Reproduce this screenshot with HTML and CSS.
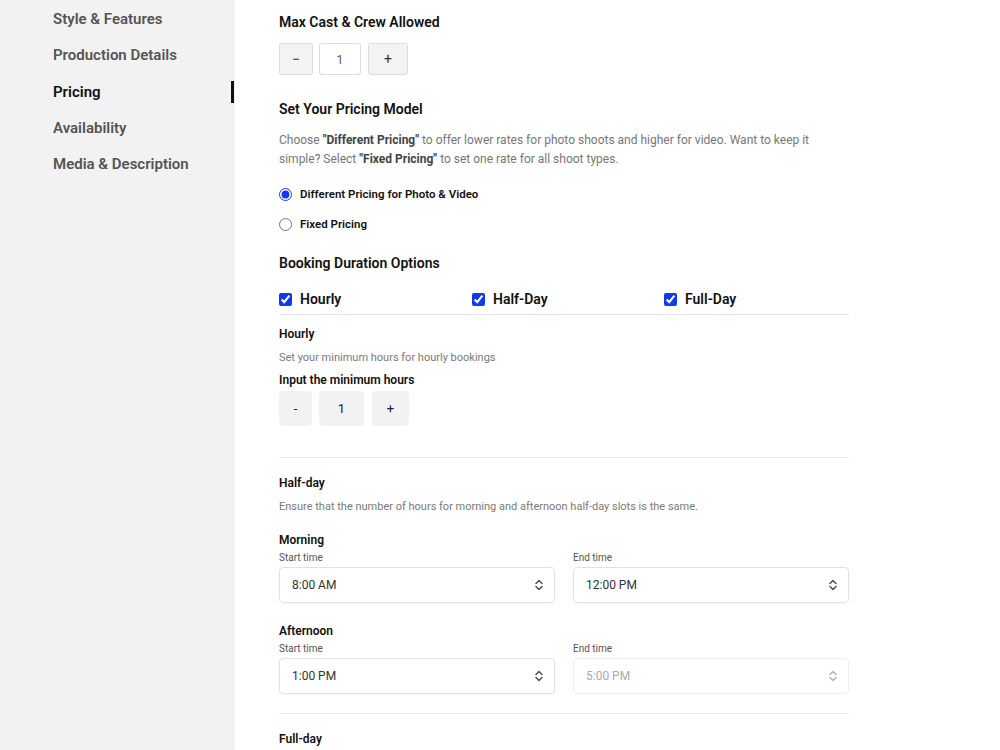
FILE: index.html
```html
<!DOCTYPE html>
<html lang="en">
<head>
  <meta charset="UTF-8">
  <meta name="viewport" content="width=device-width, initial-scale=1">
  <title>Listing - Pricing</title>
  <link rel="stylesheet" href="styles.css">
</head>
<body>
  <aside class="sidebar">
    <nav class="steps">
      <a class="step">Style &amp; Features</a>
      <a class="step">Production Details</a>
      <a class="step active">Pricing</a>
      <a class="step">Availability</a>
      <a class="step">Media &amp; Description</a>
    </nav>
  </aside>

  <main class="content">
    <h3 class="title first">Max Cast &amp; Crew Allowed</h3>
    <div class="counter">
      <button class="counter-btn">&minus;</button>
      <div class="counter-val">1</div>
      <button class="counter-btn plus">+</button>
    </div>

    <h3 class="title">Set Your Pricing Model</h3>
    <p class="intro">Choose <b>"Different Pricing"</b> to offer lower rates for photo shoots and higher for video. Want to keep it simple? Select <b>"Fixed Pricing"</b> to set one rate for all shoot types.</p>
    <label class="radio"><input type="radio" name="model" checked> Different Pricing for Photo &amp; Video</label>
    <label class="radio"><input type="radio" name="model"> Fixed Pricing</label>

    <h3 class="title booking">Booking Duration Options</h3>
    <div class="durations">
      <label class="check"><input type="checkbox" checked> Hourly</label>
      <label class="check"><input type="checkbox" checked> Half-Day</label>
      <label class="check"><input type="checkbox" checked> Full-Day</label>
    </div>

    <section class="block hourly">
      <h4 class="sub">Hourly</h4>
      <p class="hint">Set your minimum hours for hourly bookings</p>
      <div class="field-label">Input the minimum hours</div>
      <div class="stepper">
        <button class="step-btn">-</button>
        <div class="step-val">1</div>
        <button class="step-btn wide">+</button>
      </div>
    </section>

    <section class="block halfday">
      <h4 class="sub">Half-day</h4>
      <p class="hint">Ensure that the number of hours for morning and afternoon half-day slots is the same.</p>

      <div class="slot">
        <div class="slot-name">Morning</div>
        <div class="slot-grid">
          <div class="pick">
            <div class="pick-label">Start time</div>
            <div class="select">8:00 AM
              <svg class="chev" width="10" height="14" viewBox="0 0 10 14"><path d="M2 5.5 5 2.5 8 5.5M2 8.5 5 11.5 8 8.5" fill="none" stroke="currentColor" stroke-width="1.6" stroke-linecap="round" stroke-linejoin="round"/></svg>
            </div>
          </div>
          <div class="pick">
            <div class="pick-label">End time</div>
            <div class="select">12:00 PM
              <svg class="chev" width="10" height="14" viewBox="0 0 10 14"><path d="M2 5.5 5 2.5 8 5.5M2 8.5 5 11.5 8 8.5" fill="none" stroke="currentColor" stroke-width="1.6" stroke-linecap="round" stroke-linejoin="round"/></svg>
            </div>
          </div>
        </div>
      </div>

      <div class="slot">
        <div class="slot-name">Afternoon</div>
        <div class="slot-grid">
          <div class="pick">
            <div class="pick-label">Start time</div>
            <div class="select">1:00 PM
              <svg class="chev" width="10" height="14" viewBox="0 0 10 14"><path d="M2 5.5 5 2.5 8 5.5M2 8.5 5 11.5 8 8.5" fill="none" stroke="currentColor" stroke-width="1.6" stroke-linecap="round" stroke-linejoin="round"/></svg>
            </div>
          </div>
          <div class="pick">
            <div class="pick-label">End time</div>
            <div class="select disabled">5:00 PM
              <svg class="chev" width="10" height="14" viewBox="0 0 10 14"><path d="M2 5.5 5 2.5 8 5.5M2 8.5 5 11.5 8 8.5" fill="none" stroke="currentColor" stroke-width="1.6" stroke-linecap="round" stroke-linejoin="round"/></svg>
            </div>
          </div>
        </div>
      </div>
    </section>

    <section class="block fullday">
      <h4 class="sub">Full-day</h4>
    </section>
  </main>
</body>
</html>
```

FILE: styles.css
```css
/* base */
* { box-sizing: border-box; margin: 0; padding: 0; }
html, body { height: 100%; }
body {
  font-family: Roboto, 'Noto Sans', sans-serif;
  background: #ffffff;
  color: #111;
  display: flex;
  overflow: hidden;
}

/* sidebar */
.sidebar {
  width: 235px;
  flex-shrink: 0;
  background: #f2f2f2;
  min-height: 100vh;
}
.steps {
  display: flex;
  flex-direction: column;
  padding-top: 1px;
}
.step {
  position: relative;
  display: block;
  height: 36.25px;
  line-height: 36px;
  padding-left: 53px;
  font-size: 15px;
  font-weight: 600;
  color: #555;
}
.step.active { color: #111; }
.step.active::after {
  content: '';
  position: absolute;
  right: 1px;
  top: 7px;
  width: 3px;
  height: 22px;
  background: #111;
}

/* content */
.content {
  width: 614px;
  padding-left: 44px;
}
.title {
  font-size: 14px;
  font-weight: 600;
  line-height: 20px;
  margin-top: 24px;
}
.title.first { margin-top: 12px; }
.title.booking { margin-top: 20px; }

/* cast counter */
.counter {
  display: flex;
  gap: 6px;
  margin-top: 11px;
}
.counter-btn, .counter-val {
  height: 32px;
  border: 1px solid #dcdcdc;
  border-radius: 3px;
  font-family: inherit;
  font-size: 14px;
  color: #333;
}
.counter-btn { width: 34px; background: #f3f3f3; }
.counter-btn.plus { width: 40px; margin-left: 1px; }
.counter-val {
  width: 42px;
  background: #fff;
  display: flex;
  align-items: center;
  justify-content: center;
  font-size: 13px;
  color: #666;
}

.intro {
  margin-top: 12px;
  font-size: 12px;
  line-height: 19px;
  color: #777;
}
.intro b { color: #444; }

.radio {
  display: flex;
  align-items: center;
  gap: 8px;
  font-size: 11.5px;
  font-weight: 600;
  margin-top: 16px;
  height: 18px;
}
.radio + .radio { margin-top: 12px; }
.radio input, .check input {
  width: 13px;
  height: 13px;
  margin: 0;
  accent-color: #1438f0;
}

/* booking durations */
.durations {
  display: grid;
  grid-template-columns: 193px 192px 1fr;
  margin-top: 16px;
  padding-bottom: 5px;
  border-bottom: 1px solid #e4e4e4;
}
.check {
  display: flex;
  align-items: center;
  gap: 8px;
  font-size: 14px;
  font-weight: 600;
  height: 20px;
}

.block { border-bottom: 1px solid #e8e8e8; }
.block.hourly { padding: 11px 0 31px; }
.block.halfday { padding: 17px 0 19px; }
.block.fullday { padding-top: 17px; border-bottom: none; }
.sub {
  font-size: 12px;
  font-weight: 600;
  line-height: 16px;
}
.hint {
  margin-top: 8px;
  font-size: 11px;
  line-height: 16px;
  color: #7a7a7a;
}
.field-label {
  margin-top: 6px;
  font-size: 12px;
  font-weight: 600;
  line-height: 16px;
}

/* hourly stepper */
.stepper {
  display: flex;
  gap: 7px;
  margin-top: 3px;
}
.step-btn, .step-val {
  height: 35px;
  border: none;
  border-radius: 4px;
  background: #f2f2f2;
  font-family: inherit;
  font-size: 13px;
  color: #222;
}
.step-btn { width: 33px; }
.step-btn.wide { width: 37px; margin-left: 1px; }
.step-val {
  width: 45px;
  display: flex;
  align-items: center;
  justify-content: center;
}

/* half-day slots */
.slot { margin-top: 17px; }
.slot + .slot { margin-top: 20px; }
.slot-name {
  font-size: 12px;
  font-weight: 600;
  line-height: 16px;
}
.slot-grid {
  display: grid;
  grid-template-columns: 1fr 1fr;
  gap: 18px;
}
.pick-label {
  font-size: 10px;
  line-height: 13px;
  color: #555;
  margin-top: 3px;
  margin-bottom: 3px;
}
.select {
  position: relative;
  height: 36px;
  border: 1px solid #e2e2e2;
  border-radius: 4px;
  box-shadow: 0 1px 2px rgba(0,0,0,0.04);
  padding: 0 12px;
  display: flex;
  align-items: center;
  justify-content: space-between;
  font-size: 12px;
  color: #333;
}
.select .chev { color: #555; margin-right: -2px; }
.select.disabled { color: #aaa; border-color: #eeeeee; box-shadow: none; }
.select.disabled .chev { color: #b5b5b5; }
```
